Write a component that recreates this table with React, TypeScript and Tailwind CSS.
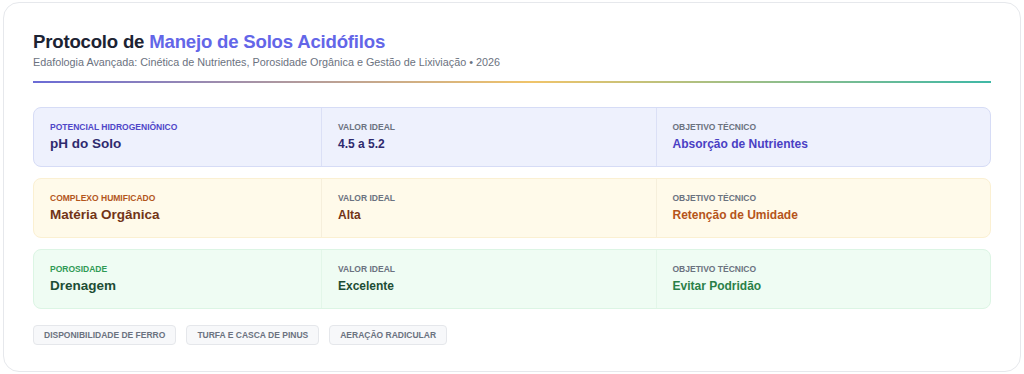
const rows = [
  {
    tag: "Potencial Hidrogeniônico",
    name: "pH do Solo",
    value: "4.5 a 5.2",
    goal: "Absorção de Nutrientes",
    box: "bg-[#eef1fd] border-[#d6dcf6]",
    divider: "border-[#dbe0f6]",
    tagColor: "text-[#4f46c8]",
    nameColor: "text-[#2e2a6e]",
    valueColor: "text-[#2e2a6e]",
    goalColor: "text-[#4a3fc4]",
  },
  {
    tag: "Complexo Humificado",
    name: "Matéria Orgânica",
    value: "Alta",
    goal: "Retenção de Umidade",
    box: "bg-[#fffaea] border-[#fbf0d2]",
    divider: "border-[#f6efdc]",
    tagColor: "text-[#b3561c]",
    nameColor: "text-[#723417]",
    valueColor: "text-[#723417]",
    goalColor: "text-[#b5541a]",
  },
  {
    tag: "Porosidade",
    name: "Drenagem",
    value: "Excelente",
    goal: "Evitar Podridão",
    box: "bg-[#effcf3] border-[#dcf5e4]",
    divider: "border-[#e3f6e9]",
    tagColor: "text-[#2f9a55]",
    nameColor: "text-[#1d4d35]",
    valueColor: "text-[#1d4d35]",
    goalColor: "text-[#2a8048]",
  },
];

const tags = ["Disponibilidade de Ferro", "Turfa e Casca de Pinus", "Aeração Radicular"];

export default function App() {
  return (
    <div className="w-[1024px] h-[374px] bg-white p-[2px_3px] font-['Liberation_Sans',Arial,sans-serif]">
      <div className="h-[370px] rounded-2xl border border-[#e6e8ec] bg-white px-[29px] pt-[26px]">
        <h1 className="text-[18.6px] leading-[26px] font-bold text-[#1c2333] tracking-[-0.2px]">
          Protocolo de <span className="text-[#6366e8]">Manejo de Solos Acidófilos</span>
        </h1>
        <p className="text-[10.8px] leading-[14px] text-[#6b7280]">
          Edafologia Avançada: Cinética de Nutrientes, Porosidade Orgânica e Gestão de Lixiviação
          <span className="mx-[3px]">•</span>2026
        </p>
        <div className="mt-[12px] h-[2px] bg-[linear-gradient(90deg,#6b6bd6_0%,#f0c46a_52%,#3fb8a6_100%)]" />

        <div className="mt-[24px] flex flex-col gap-[11px]">
          {rows.map((r) => (
            <div
              key={r.name}
              className={`grid grid-cols-[287px_1fr_1fr] h-[60px] rounded-lg border ${r.box}`}
            >
              <div className="px-[16px] pt-[13px]">
                <div className={`text-[8.5px] leading-[12px] font-bold uppercase ${r.tagColor}`}>{r.tag}</div>
                <div className={`text-[13.5px] leading-[18px] font-bold mt-[2px] ${r.nameColor}`}>{r.name}</div>
              </div>
              <div className={`border-l px-[16px] pt-[13px] ${r.divider}`}>
                <div className="text-[8.5px] leading-[12px] font-bold uppercase text-[#6b7280]">Valor Ideal</div>
                <div className={`text-[12px] leading-[18px] font-bold mt-[2px] ${r.valueColor}`}>{r.value}</div>
              </div>
              <div className={`border-l px-[16px] pt-[13px] ${r.divider}`}>
                <div className="text-[8.5px] leading-[12px] font-bold uppercase text-[#6b7280]">Objetivo Técnico</div>
                <div className={`text-[12px] leading-[18px] font-bold mt-[2px] ${r.goalColor}`}>{r.goal}</div>
              </div>
            </div>
          ))}
        </div>

        <div className="mt-[16px] flex gap-[10px]">
          {tags.map((t) => (
            <span
              key={t}
              className="h-[20px] px-[10px] flex items-center rounded-[4px] border border-[#e5e7eb] bg-[#f7f8fa] text-[8.5px] font-bold uppercase text-[#6b7280]"
            >
              {t}
            </span>
          ))}
        </div>
      </div>
    </div>
  );
}
